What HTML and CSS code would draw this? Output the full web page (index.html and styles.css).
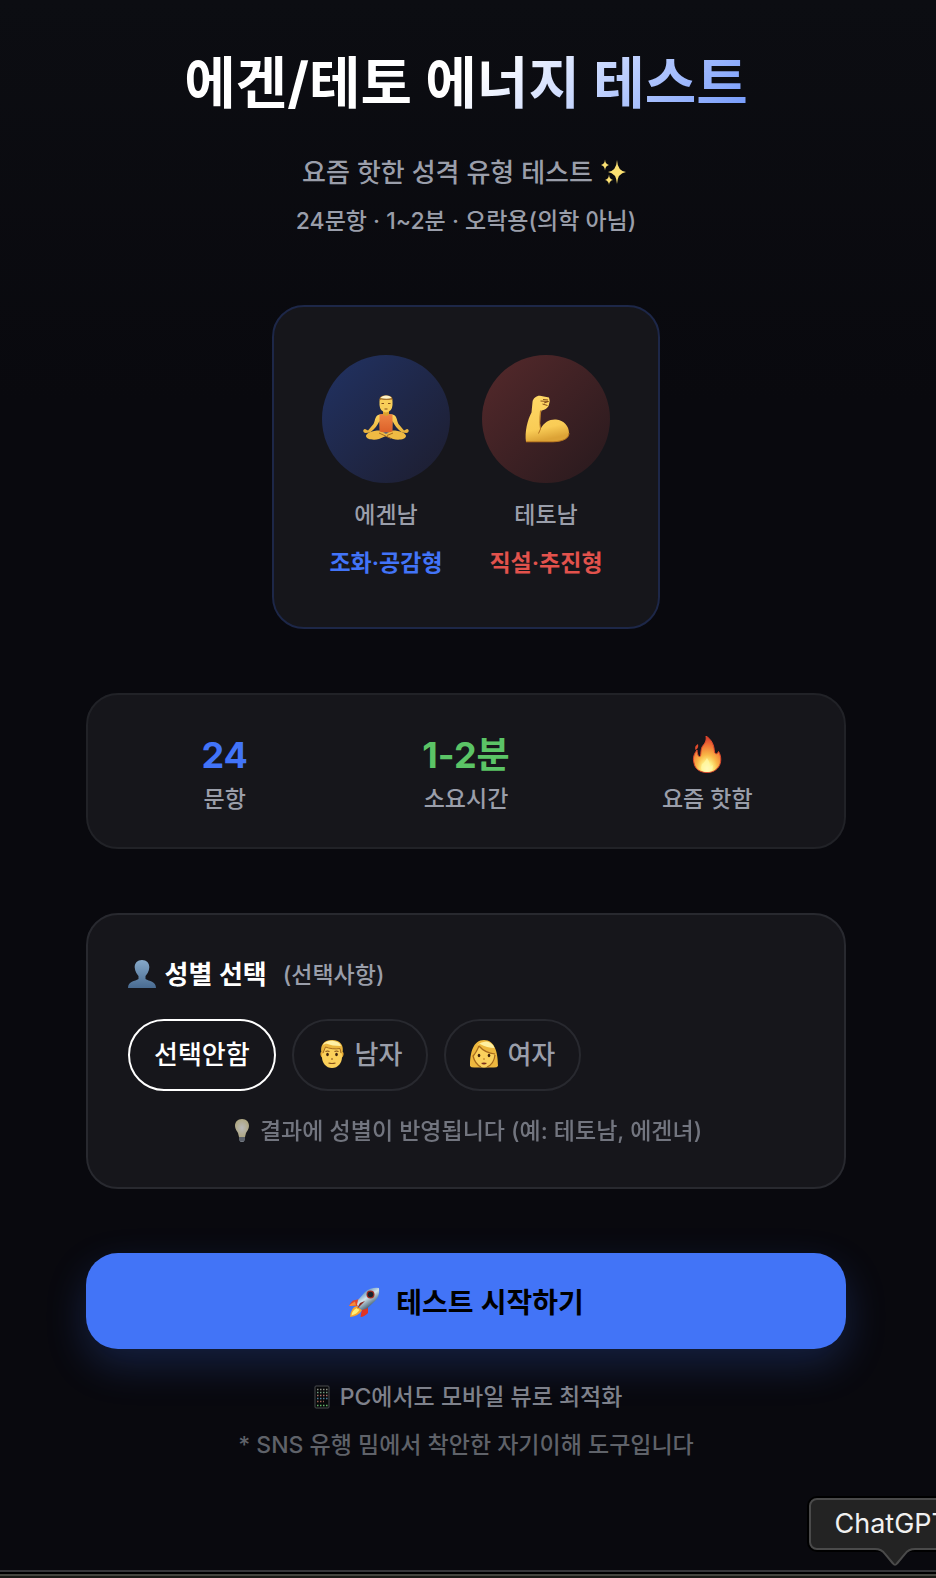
FILE: index.html
```html
<!DOCTYPE html>
<html lang="ko">
<head>
<meta charset="utf-8">
<meta name="viewport" content="width=device-width, initial-scale=1">
<title>에겐/테토 에너지 테스트</title>
<link rel="stylesheet" href="styles.css">
</head>
<body>
<main class="page">
  <header class="hero">
    <h1 class="title">에겐/테토 에너지 테스트</h1>
    <p class="subtitle">요즘 핫한 성격 유형 테스트
      <svg class="icon" width="28" height="28" viewBox="0 0 28 28" aria-hidden="true">
        <g fill="#fbe072"><path d="M17 2Q17.600 13 26 14Q17.600 15 17 26Q16.400 15 8 14Q16.400 13 17 2Z"/><path d="M5 1.500Q5.300 6.200 9 7Q5.300 7.800 5 12.500Q4.700 7.800 1 7Q4.700 6.200 5 1.500Z"/><path d="M9 16.500Q9.300 21.200 13 22Q9.300 22.800 9 27Q8.700 22.800 5 22Q8.700 21.200 9 16.500Z"/></g>
      </svg>
    </p>
    <p class="meta">24문항 · 1~2분 · 오락용(의학 아님)</p>
  </header>

  <section class="card types">
    <div class="type">
      <div class="orb orb-blue">
        <svg width="48" height="48" viewBox="0 0 48 48" aria-hidden="true">
          <defs>
            <linearGradient id="skin" x1="0" y1="0" x2="0" y2="1"><stop offset="0" stop-color="#fbd55f"/><stop offset="1" stop-color="#e8b03a"/></linearGradient>
            <linearGradient id="shirt" x1="0" y1="0" x2="0" y2="1"><stop offset="0" stop-color="#ee8444"/><stop offset="1" stop-color="#dc6029"/></linearGradient>
          </defs>
          <path d="M17.500 19.500C13 20 13.500 25 11.500 29L6 35.500L3 34C.5 34.500.8 37.500 3.500 38L8 37.500C13 34 15.500 30 17.500 26L18 36H30L30.500 26C32.500 30 35 34 40 37.500L44.500 38C47.200 37.500 47.500 34.500 45 34L42 35.500L36.500 29C34.500 25 35 20 30.500 19.500Z" fill="url(#skin)"/>
          <path d="M21 14H27V19L30 21L24 24L18 21L21 19Z" fill="#dba02d"/>
          <path d="M17.500 35.500C10 35.500 4 38 4 41C4 44.500 12 45.500 17 44L24 41L31 44C36 45.500 44 44.500 44 41C44 38 38 35.500 30.500 35.500L24 38Z" fill="#efba43"/>
          <path d="M17.500 19.500L20.500 19Q24 23 27.500 19L30.500 19.500V36.500Q24 38.500 17.500 36.500Z" fill="url(#shirt)"/>
          <path d="M17 38L29 43.500M31 38L25 40.500" stroke="#a66b20" stroke-width="1" fill="none"/>
          <path d="M21 37.500L24 39L27 37.500Z" fill="#69738a"/>
          <path d="M17.500 6Q17.500 1 24 1Q30.500 1 30.500 6V10Q30 17 24 17.500Q18 17 17.500 10Z" fill="#f8cf59"/>
          <path d="M17.500 5.500Q17 2 20 1Q24-.5 28 1Q31 2 30.500 5.500L29.500 4.500Q25 5.500 19 4.500Z" fill="#a87427"/>
          <path d="M18.500 3Q20 .5 24 .5Q28.500.5 29.500 3Q25 4.500 18.500 3Z" fill="#fff4c8"/>
          <path d="M19.500 8.500H22M26 8.500H28.500M22.500 14H25.500" stroke="#855018" stroke-width="1"/>
        </svg>
      </div>
      <p class="type-name">에겐남</p>
      <p class="type-trait blue">조화·공감형</p>
    </div>
    <div class="type">
      <div class="orb orb-red">
        <svg width="48" height="48" viewBox="-2 0 48 48" aria-hidden="true">
          <defs><linearGradient id="arm" x1="0" y1="0" x2=".2" y2="1"><stop offset="0" stop-color="#ffd967"/><stop offset=".75" stop-color="#f9cc56"/><stop offset="1" stop-color="#dca336"/></linearGradient></defs>
          <path d="M8.500 7C9 3 13 .5 16 .8L25 2.500Q26.500 6 25 9.500C24.500 12.500 21 15 17.500 15.500L16.500 20Q15.500 28 16.500 34C20 27 26 24 32 24.500C40 25.500 45 31 45 38C45 43 40 46.500 29 47H2C.500 37 3.500 25 7.500 17.500Z" fill="url(#arm)"/>
          <path d="M2 46.800H29C40 46.500 45 43 45 38M16.500 34L14.500 38.500M16.500 15.500L16 22Q15.500 29 16.500 34" fill="none" stroke="#b57420" stroke-width="1"/>
          <path d="M16.500 6L24.500 6.500L20 8M19 4.500L24 5M18.500 9L23.500 10.500" stroke="#86501b" stroke-width="1" fill="none"/>
        </svg>
      </div>
      <p class="type-name">테토남</p>
      <p class="type-trait red">직설·추진형</p>
    </div>
  </section>

  <section class="card stats">
    <div class="stat"><strong class="stat-value blue">24</strong><span class="stat-label">문항</span></div>
    <div class="stat"><strong class="stat-value green">1-2분</strong><span class="stat-label">소요시간</span></div>
    <div class="stat">
      <span class="stat-value">
        <svg width="36" height="38" viewBox="0 0 36 38" role="img" aria-label="불">
          <defs>
            <radialGradient id="fire" cx=".5" cy=".9" r=".85"><stop offset="0" stop-color="#fffde0"/><stop offset=".22" stop-color="#fff184"/><stop offset=".45" stop-color="#f9b847"/><stop offset=".75" stop-color="#f07535"/><stop offset="1" stop-color="#dc4030"/></radialGradient>
          </defs>
          <path d="M17 0C23 4 25 9 25.500 16C26.500 19 28.500 18 29.500 15.500C32.500 20 32.500 27 29.500 31C26 35.500 22 36.500 18 36.500C11 36.500 6 33 5 27C3.500 22 5 18 8 14C8.500 18 9 21 11 20.500C12.500 20 11 13 14 9.500C17 6 17.500 4 17 0Z" fill="url(#fire)" stroke="#df482d" stroke-width="1"/>
          <path d="M9 8Q10 12 6.500 14Q5 10 9 8Z" fill="#df4a2c"/>
          <path d="M18 22C16 25 15 27 13 28Q10 36 18 36Q25 36 23.500 29L21 31Q21 26 18 22Z" fill="#fff8a8" opacity=".7"/>
        </svg>
      </span>
      <span class="stat-label">요즘 핫함</span>
    </div>
  </section>

  <section class="card gender" aria-labelledby="gender-title">
    <div class="gender-head">
      <h2 class="gender-title" id="gender-title">
        <svg class="icon" width="28" height="28" viewBox="0 0 28 28" aria-hidden="true">
          <defs><linearGradient id="bust" x1="0" y1="0" x2="0" y2="1"><stop offset="0" stop-color="#86a9c9"/><stop offset="1" stop-color="#496b91"/></linearGradient></defs>
          <path d="M14 0C18.500 0 21.500 3 21.300 7.500C21 12 18.500 14.500 17.500 16V19C21 21.500 28 21 28 28H0C0 21 7 21.500 10.500 19V16C9.500 14.500 7 12 6.700 7.500C6.500 3 9.500 0 14 0Z" fill="url(#bust)"/>
        </svg>
        성별 선택</h2>
      <span class="optional">(선택사항)</span>
    </div>
    <div class="choices">
      <button class="choice selected" type="button" aria-pressed="true">선택안함</button>
      <button class="choice" type="button" aria-pressed="false">
        <svg class="icon" width="28" height="28" viewBox="0 0 28 28" aria-hidden="true">
          <path d="M4 12Q2 11.500 2.500 15Q3.500 18.500 5 18ZM24 12Q26 11.500 25.500 15Q24.500 18.500 23 18Z" fill="#e6a934"/>
          <path d="M4 8Q5 3 14 3Q23 3 24 8V17C24 23 20 28 14 28C8 28 4 23 4 17Z" fill="#fbd05a"/>
          <path d="M3.500 13C2 6 5 0 14 0C23 0 26 6 24.500 13L23 14L22 8.500C17 9.500 11 8.500 7.500 7L5 14Z" fill="#eab63e"/>
          <path d="M5 5C7 1 12 .5 16 1Q22 2 23 6Q14 6 8 3.500Z" fill="#fff0a5"/>
          <path d="M5 13L7.500 7C11 8.500 17 9.500 22 8.500L23 13" stroke="#a76d20" fill="none"/>
          <ellipse cx="9.500" cy="14.500" rx="1.300" ry="1.800" fill="#40240f"/><ellipse cx="18.500" cy="14.500" rx="1.300" ry="1.800" fill="#40240f"/>
          <path d="M7.500 11.500Q9.500 10.500 11.500 11.500M16.500 11.500Q18.500 10.500 20.500 11.500M13 19H15M10.500 23Q14 24 17.500 23" stroke="#85501a" stroke-width="1.200" fill="none"/>
        </svg>
        남자</button>
      <button class="choice" type="button" aria-pressed="false">
        <svg class="icon" width="28" height="28" viewBox="0 0 28 28" aria-hidden="true">
          <path d="M0 26C0 13 3 0 14 0C25 0 28 13 28 26Q27 28 22 27.500H6Q1 28 0 26Z" fill="#eeb83e"/>
          <path d="M4 14L9 7Q15 12 24 14V18C23 23 19 27 14 27.500C9 27 5 23 4.500 18Z" fill="#fbd15d"/>
          <path d="M9 6Q15 13 25 14M9 6Q6 13 3 16Q5 24 11 27M25 15Q24 24 17 27" stroke="#a66a1d" stroke-width="1.200" fill="none"/>
          <path d="M7 5Q12 1 17 1.500Q23 3 24.500 8Q17 8 10 4Z" fill="#fff0a0"/>
          <ellipse cx="9" cy="15.500" rx="1.300" ry="1.700" fill="#40240f"/><ellipse cx="19" cy="15.500" rx="1.300" ry="1.700" fill="#40240f"/>
          <path d="M13 19H15" stroke="#b57625"/><path d="M11 23Q14 22 17 23Q14 26 11 23Z" fill="#7d321d"/>
        </svg>
        여자</button>
    </div>
    <p class="hint">
      <svg class="icon-small" width="24" height="24" viewBox="0 0 24 24" aria-hidden="true">
        <defs><radialGradient id="bulb"><stop offset="0" stop-color="#fff"/><stop offset="1" stop-color="#f0e5b0"/></radialGradient></defs>
        <path d="M12 0C16.500 0 19 3 19 7C19 10 17 12 16 14L15 18H9L8 14C7 12 5 10 5 7C5 3 7.500 0 12 0Z" fill="url(#bulb)"/>
        <path d="M9 18H15V21L13.500 23H10.500L9 21Z" fill="#9ba3ad"/><path d="M9 19H15M9 21H15" stroke="#555d68"/>
      </svg>
      결과에 성별이 반영됩니다 (예: 테토남, 에겐녀)</p>
  </section>

  <button class="start" type="button">
    <svg width="32" height="32" viewBox="0 0 32 32" aria-hidden="true">
      <defs><linearGradient id="hull" x1=".3" y1=".2" x2=".7" y2=".8"><stop offset="0" stop-color="#6d9cc4"/><stop offset=".4" stop-color="#d3e3ea"/><stop offset=".65" stop-color="#94abb8"/><stop offset="1" stop-color="#405a70"/></linearGradient></defs>
      <path d="M12 12L5 13.500Q2 16 1 19L10 19Z" fill="#e3462b"/><path d="M7 14.500Q3 16.500 1 19L8 18.500Z" fill="#f58a3a"/>
      <path d="M20 20L20 26Q16 30 12.500 30L14 22Z" fill="#e03422"/>
      <path d="M9 19Q3 20 2 30Q11 29 14 23Z" fill="#f8a52c"/><path d="M9 21Q4 23 3.500 28.500Q9 27 11.500 23Z" fill="#fff078"/>
      <path d="M31 1Q23 0 17 5L10 13L9 18L14 23L19 21.500L27 14Q32 9 31 1Z" fill="url(#hull)"/>
      <circle cx="22.500" cy="7.500" r="4" fill="#a32e24"/><circle cx="22.500" cy="7.500" r="2.800" fill="#17232d"/>
      <path d="M17 14L9 22L12 16Z" fill="#8c2720"/>
    </svg>
    <span>테스트 시작하기</span>
  </button>

  <footer class="notes">
    <p class="note">
      <svg class="icon-small" width="24" height="24" viewBox="0 0 24 24" aria-hidden="true">
        <rect x="5" y="1" width="14" height="22" rx="1" fill="#07080a" stroke="#4a4d4f"/>
        <g stroke-width="1.500" stroke-dasharray="1.500 1.500"><path d="M7 4.500H18" stroke="#8d8f86"/><path d="M7 7.500H18" stroke="#6f9a7f"/><path d="M7 10.500H18" stroke="#a66d69"/><path d="M7 13.500H18" stroke="#4d7f9b"/><path d="M7 16.500H14" stroke="#9a6054"/><path d="M7 20.500H18" stroke="#63b467"/></g>
      </svg>
      PC에서도 모바일 뷰로 최적화</p>
    <p class="note faint">* SNS 유행 밈에서 착안한 자기이해 도구입니다</p>
  </footer>
</main>

<div class="dock">
  <div class="tooltip" role="tooltip">ChatGPT
    <svg class="tooltip-arrow" width="40" height="20" viewBox="0 0 40 20" aria-hidden="true"><path d="M0 0H40V2C34 2 33 3 30 6L22 16Q20 18 18 16L10 6C7 3 6 2 0 2Z" fill="#232323"/><path d="M0 1C6 1 8 3 10 6L18 15.500Q20 18 22 15.500L30 6C32 3 34 1 40 1" fill="none" stroke="#4a4a4a" stroke-width="2"/></svg>
  </div>
</div>
</body>
</html>
```
FILE: styles.css
```css
* {
  box-sizing: border-box;
}

body {
  margin: 0;
  min-height: 100vh;
  display: flex;
  flex-direction: column;
  background: linear-gradient(#0c0d12, #09090e 400px);
  color: #fff;
  font-family: Inter, "Noto Sans CJK KR", sans-serif;
  font-weight: 500;
  overflow-x: hidden;
}

h1,
h2,
p {
  margin: 0;
}

button {
  font-family: inherit;
  font-weight: inherit;
  cursor: pointer;
}

.icon {
  margin-right: 2px;
  vertical-align: -4px;
}

.icon-small {
  vertical-align: -4px;
}

.page {
  flex: 1;
  width: 100%;
  max-width: 764px;
  margin: 0 auto;
  padding: 40px 4px 0 0;
  display: flex;
  flex-direction: column;
  align-items: center;
}

.hero {
  width: 100%;
  display: flex;
  flex-direction: column;
  align-items: center;
  text-align: center;
}

.title {
  width: 100%;
  font-size: 56px;
  line-height: 86px;
  font-weight: 700;
  background: linear-gradient(135deg, #fff 50%, #4275fa 100%);
  background-clip: text;
  -webkit-background-clip: text;
  color: transparent;
}

.subtitle {
  margin-top: 27px;
  font-size: 26px;
  line-height: 40px;
  color: #9a9eaa;
}

.meta {
  margin-top: 12px;
  font-size: 23px;
  line-height: 32px;
  color: #9a9eaa;
}

.card {
  background: #16161b;
  border: 2px solid #212227;
  border-radius: 32px;
}

.types {
  margin-top: 68px;
  padding: 48px;
  display: flex;
  gap: 32px;
  border-color: #1d2748;
}

.type {
  width: 128px;
  display: flex;
  flex-direction: column;
  align-items: center;
  gap: 16px;
  font-size: 23px;
  line-height: 32px;
  white-space: nowrap;
}

.orb {
  width: 128px;
  height: 128px;
  border-radius: 50%;
  display: grid;
  place-items: center;
}

.orb-blue {
  background: linear-gradient(135deg, #213263, #1d1d2e);
}

.orb-red {
  background: linear-gradient(135deg, #55292b, #27191d);
}

.type-name {
  color: #9a9eaa;
}

.type-trait {
  font-weight: 600;
}

.blue {
  color: #4274f8;
}

.red {
  color: #e2524c;
}

.green {
  color: #5bc466;
}

.stats {
  width: 100%;
  margin-top: 64px;
  padding: 32px;
  display: grid;
  grid-template-columns: repeat(3, 1fr);
  gap: 32px;
}

.stat {
  display: flex;
  flex-direction: column;
  align-items: center;
}

.stat-value {
  height: 56px;
  display: flex;
  align-items: center;
  font-size: 36px;
  line-height: 56px;
  font-weight: 700;
}

.stat-label {
  font-size: 23px;
  line-height: 32px;
  color: #9a9eaa;
}

.gender {
  width: 100%;
  margin-top: 64px;
  padding: 40px;
  border-color: #28292f;
}

.gender-head {
  display: flex;
  align-items: center;
  gap: 16px;
}

.gender-title {
  font-size: 26px;
  line-height: 40px;
  font-weight: 600;
}

.optional {
  font-size: 23px;
  line-height: 32px;
  color: #9a9eaa;
}

.choices {
  margin-top: 24px;
  display: flex;
  flex-wrap: wrap;
  gap: 16px;
}

.choice {
  height: 72px;
  padding: 0 24px;
  border: 2px solid #28292f;
  border-radius: 36px;
  background: transparent;
  color: #9a9eaa;
  font-size: 26px;
  line-height: 40px;
}

.choice.selected {
  border-color: #fff;
  color: #fff;
}

.hint {
  margin-top: 24px;
  font-size: 23px;
  line-height: 32px;
  text-align: center;
  color: #9a9eaa;
  opacity: 0.7;
}

.start {
  width: 100%;
  height: 96px;
  margin-top: 64px;
  padding: 4px 32px 0;
  display: flex;
  align-items: center;
  justify-content: center;
  gap: 16px;
  border: 0;
  border-radius: 32px;
  background: #4274f7;
  box-shadow: 0 16px 40px rgba(66, 116, 247, 0.22);
  color: #000;
  font-size: 28px;
  line-height: 40px;
  font-weight: 600;
}

.notes {
  margin: 32px 0;
  display: flex;
  flex-direction: column;
  gap: 16px;
  text-align: center;
}

.note {
  font-size: 23px;
  line-height: 32px;
  color: #7e818b;
}

.faint {
  color: #5f6269;
}

.dock {
  position: relative;
  height: 8px;
  border-top: 2px solid #37373a;
  background: linear-gradient(#000 2px, #45463f 2px 4px, #1b1b16 4px);
}

.tooltip {
  position: absolute;
  right: -39px;
  bottom: 28px;
  padding: 0 24px;
  border: 2px solid #4a4a4a;
  border-radius: 8px;
  background: #232323;
  box-shadow: 0 0 0 2px #000;
  color: #f0f0f0;
  font-size: 27px;
  line-height: 48px;
  font-weight: 400;
}

.tooltip-arrow {
  position: absolute;
  left: 64px;
  top: 48px;
}
```
